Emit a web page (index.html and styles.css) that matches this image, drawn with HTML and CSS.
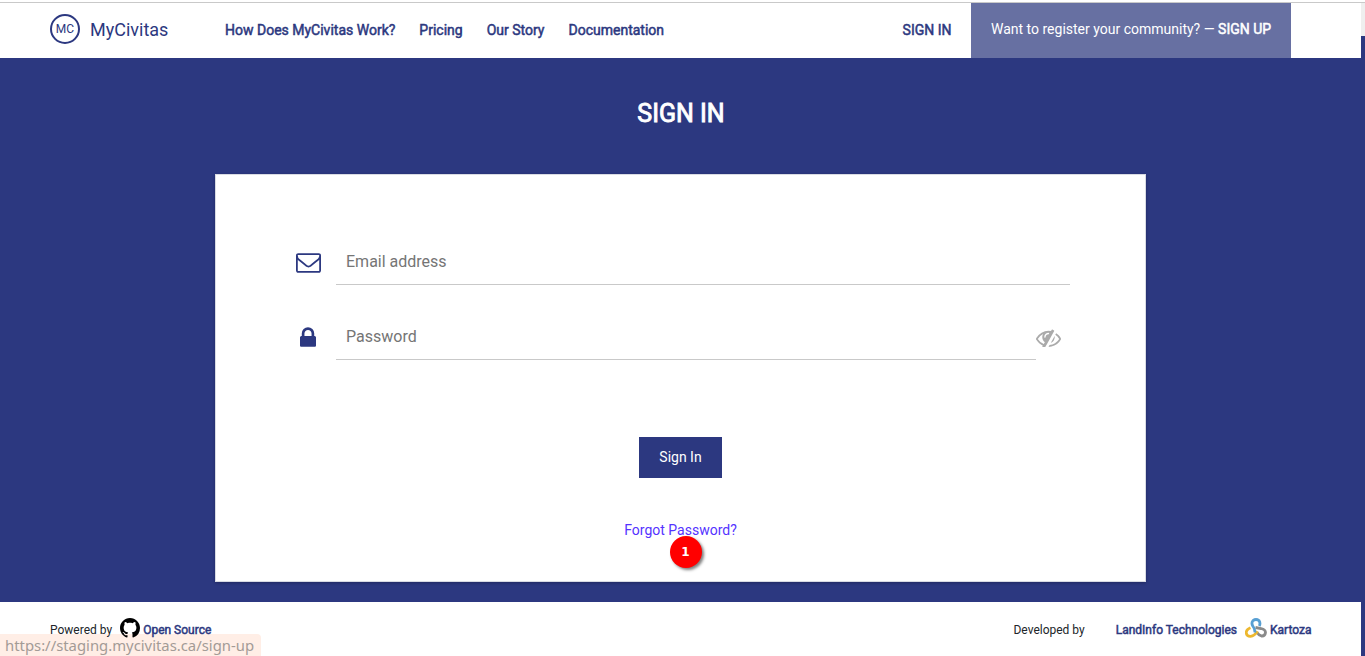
FILE: index.html
```html
<!DOCTYPE html>
<html lang="en">
<head>
<meta charset="utf-8">
<title>MyCivitas - Sign In</title>
<link rel="stylesheet" href="styles.css">
</head>
<body>
<div class="window">
  <div class="page">
    <header class="header">
      <a class="brand"><span class="brand-mark">MC</span><span class="brand-name">MyCivitas</span></a>
      <nav class="nav strong">
        <a>How Does MyCivitas Work?</a>
        <a>Pricing</a>
        <a>Our Story</a>
        <a>Documentation</a>
      </nav>
      <a class="nav-signin strong">SIGN IN</a>
      <a class="register">Want to register your community? — <span class="strong">SIGN UP</span></a>
    </header>
    <main class="main">
      <h1 class="title">SIGN IN</h1>
      <form class="card">
        <div class="field">
          <span class="field-icon">
            <svg class="icon-mail" viewBox="0 256 1792 1408"><path d="M1664 1504v-768q-32 36-69 66-268 206-426 338-51 43-83 67t-86.500 48.500-102.500 24.500h-2q-48 0-102.500-24.500t-86.500-48.500-83-67q-158-132-426-338-37-30-69-66v768q0 13 9.500 22.500t22.500 9.500h1472q13 0 22.500-9.500t9.500-22.500zm0-1051v-24.500l-.5-13-3-12.500-5.500-9-9-7.500-14-2.500h-1472q-13 0-22.500 9.500t-9.500 22.500q0 168 147 284 193 152 401 317 6 5 35 29.500t46 37.500 44.500 31.500 50.500 27.500 43 9h2q20 0 43-9t50.500-27.500 44.500-31.500 46-37.500 35-29.500q208-165 401-317 54-43 100.500-115.500t46.500-131.500zm128-37v1088q0 66-47 113t-113 47h-1472q-66 0-113-47t-47-113v-1088q0-66 47-113t113-47h1472q66 0 113 47t47 113z"/></svg>
          </span>
          <span class="input">Email address</span>
        </div>
        <div class="field">
          <span class="field-icon">
            <svg class="icon-lock" viewBox="320 128 1152 1408"><path d="M640 768h512v-192q0-106-75-181t-181-75-181 75-75 181v192zm832 96v576q0 40-28 68t-68 28h-960q-40 0-68-28t-28-68v-576q0-40 28-68t68-28h32v-192q0-184 132-316t316-132 316 132 132 316v192h32q40 0 68 28t28 68z"/></svg>
          </span>
          <span class="input">Password</span>
          <span class="reveal">
            <svg class="icon-eye" viewBox="0 256 1792 1280"><path d="M555 1335l78-141q-87-63-136-159t-49-203q0-121 61-225-229 117-381 353 167 258 427 375zm389-759q0-20-14-34t-34-14q-125 0-214.500 89.500t-89.500 214.500q0 20 14 34t34 14 34-14 14-34q0-86 61-147t147-61q20 0 34-14t14-34zm363-191q0 7-1 9-106 189-316 567t-315 566l-49 89q-10 16-28 16-12 0-134-70-16-10-16-28 0-12 44-87-143-65-263.500-173t-208.500-245q-20-31-20-69t20-69q153-235 380-371t496-136q89 0 180 17l54-97q10-16 28-16 5 0 18 6t31 15.500 33 18.500 31.500 18.500 19.500 11.500q16 10 16 27zm37 447q0 139-79 253.500t-209 164.500l280-502q8 45 8 84zm448 128q0 35-20 69-39 64-109 145-150 172-347.500 267t-419.500 95l74-132q212-18 392.500-137t301.500-307q-115-179-282-294l63-112q95 64 182.500 153t144.500 184q20 34 20 69z"/></svg>
          </span>
        </div>
        <button class="submit" type="button">Sign In</button>
        <a class="forgot">Forgot Password?</a>
        <span class="marker">1</span>
      </form>
    </main>
    <footer class="footer">
      <span>Powered by</span>
      <a class="credit credit-source strong">
        <svg class="icon-github" viewBox="0 0 16 16"><path d="M8 0C3.58 0 0 3.58 0 8c0 3.54 2.290 6.530 5.470 7.590.4.070.55-.17.55-.38 0-.19-.01-.82-.01-1.490-2.010.37-2.530-.49-2.690-.94-.09-.23-.48-.94-.82-1.130-.28-.15-.68-.52-.01-.53.63-.01 1.080.58 1.230.82.72 1.210 1.870.87 2.330.66.070-.52.28-.87.51-1.070-1.780-.2-3.640-.89-3.640-3.950 0-.87.31-1.590.82-2.150-.08-.2-.36-1.020.08-2.120 0 0 .67-.21 2.200.82.64-.18 1.320-.27 2-.27s1.360.09 2 .27c1.530-1.040 2.200-.82 2.200-.82.44 1.100.16 1.920.08 2.120.51.56.82 1.270.82 2.150 0 3.070-1.870 3.750-3.650 3.950.29.25.54.73.54 1.480 0 1.070-.01 1.930-.01 2.200 0 .21.15.46.55.38A8.010 8.010 0 0 0 16 8c0-4.420-3.580-8-8-8z"/></svg>
        Open Source
      </a>
      <span class="developed">Developed by</span>
      <a class="credit credit-landinfo strong">LandInfo Technologies</a>
      <a class="credit credit-kartoza strong">
        <svg class="icon-kartoza" viewBox="0 0 22 20">
          <path class="k-gray" d="M10.500 9.500L16 10.500Q20.500 11.500 20.500 14.500Q20 18.300 16.500 18Q13.500 17 11.800 14.300"/>
          <path class="k-gold" d="M5.500 9.800Q1.200 11.500 1.200 15Q2 18.500 5.500 18.300Q9.500 18 12.500 13.300"/>
          <path class="k-blue" d="M9.800 14.500Q10.200 11 7.800 8Q6 4.800 8 2.600Q11 .3 14 2.600Q15.800 5.200 14.200 8"/>
        </svg>
        Kartoza
      </a>
    </footer>
  </div>
  <div class="scrollbar"><div class="scroll-thumb"></div></div>
</div>
<div class="status">https://staging.mycivitas.ca/sign-up</div>
</body>
</html>
```
FILE: styles.css
```css
* { box-sizing: border-box; }
body {
  margin: 0;
  height: 656px;
  overflow: hidden;
  background: #fff;
  color: #212529;
  font: 14px/21px Roboto, "Liberation Sans", sans-serif;
}
svg { display: block; flex: none; }
.window {
  display: flex;
  height: 656px;
  padding-top: 2px;
}
.page {
  flex: 1;
  display: flex;
  flex-direction: column;
  border-top: 1px solid #c9c9c9;
}
.scrollbar {
  width: 4px;
  padding-top: 33px;
  border-top: 1px solid #c9c9c9;
  background: #efefef;
}
.scroll-thumb { height: 620px; background: #2c3880; }
.strong { -webkit-text-stroke: 0.5px currentColor; }

.header {
  display: flex;
  align-items: center;
  height: 55px;
  padding: 0 70px 0 50px;
  color: #2c3880;
}
.brand { display: flex; align-items: center; gap: 10px; width: 175px; }
.brand-mark {
  width: 30px;
  height: 30px;
  margin-top: -3px;
  border: 2px solid #2c3880;
  border-radius: 50%;
  font-size: 12px;
  line-height: 27px;
  text-align: center;
}
.brand-name { margin-top: -2px; font-size: 18px; }
.nav { display: flex; gap: 24px; }
.nav-signin { margin-left: auto; margin-right: 19.5px; }
.register {
  align-self: stretch;
  width: 320px;
  padding: 16px 0 0 20px;
  background: #6770a2;
  color: #fff;
  white-space: nowrap;
}

.main {
  display: flex;
  flex-direction: column;
  align-items: center;
  height: 544px;
  background: #2c3880;
}
.title {
  margin: 36px 0 41px;
  padding-left: 1px;
  color: #fff;
  font-size: 25px;
  font-weight: 400;
  line-height: 39px;
  -webkit-text-stroke: 0.9px currentColor;
}
.card {
  position: relative;
  display: flex;
  flex-direction: column;
  align-items: center;
  width: 931px;
  height: 408px;
  padding: 61px 75px 0 79px;
  background: #fff;
  border: 1px solid #d9dbe3;
  box-shadow: 0 1px 3px rgba(0, 0, 0, .25);
}
.field {
  display: flex;
  align-self: stretch;
  height: 49px;
  margin-bottom: 26px;
}
.field-icon {
  display: flex;
  justify-content: center;
  width: 26px;
  margin-right: 15px;
  padding-top: 17px;
  fill: #2c3880;
}
.icon-mail { width: 25px; height: 20px; }
.icon-lock { width: 16px; height: 20px; margin-top: -1px; }
.input {
  flex: 1;
  padding: 14px 10px 0;
  border-bottom: 1px solid #c9c9c9;
  color: #757575;
  font-size: 16px;
  line-height: 24px;
}
.reveal { width: 34px; padding-top: 18px; fill: #aaa; }
.icon-eye { width: 25px; height: 18px; }
.submit {
  width: 83px;
  height: 41px;
  margin-top: 51px;
  margin-right: 4px;
  padding: 0;
  border: 0;
  background: #2c3880;
  color: #fff;
  font: inherit;
}
.forgot { margin: 42px 4px 0 0; color: #5533ff; }
.marker {
  position: absolute;
  left: 453.5px;
  top: 360.5px;
  width: 32px;
  height: 32px;
  border-radius: 50%;
  background: #f00;
  box-shadow: 2px 2px 3px rgba(0, 0, 0, .5);
  color: #fff;
  font: bold 12px/32px "DejaVu Sans", sans-serif;
  text-align: center;
}

.footer {
  position: relative;
  z-index: 1;
  display: flex;
  align-items: center;
  height: 54px;
  padding: 2px 49.5px 0 50px;
  font-size: 12px;
}
.credit { display: flex; align-items: center; gap: 3px; color: #2c3880; }
.credit-source { margin-left: 8px; }
.icon-github { width: 20px; height: 20px; margin-top: -4px; fill: #000; stroke: none; }
.developed { margin-left: auto; }
.credit-landinfo { margin-left: 31px; }
.credit-kartoza { margin-left: 8px; }
.icon-kartoza {
  width: 22px;
  height: 20px;
  margin-top: -4px;
  fill: none;
  stroke-width: 2.8;
}
.k-blue { stroke: #589fd3; }
.k-gold { stroke: #edb82f; }
.k-gray { stroke: #8a8a8a; }

.status {
  position: absolute;
  left: 0;
  bottom: 0;
  width: 261px;
  height: 22px;
  padding-left: 5px;
  border-radius: 0 4px 0 0;
  background: #ffeee6;
  color: #a39b96;
  font: 14.85px/23px "Noto Sans", sans-serif;
  white-space: nowrap;
}
```
